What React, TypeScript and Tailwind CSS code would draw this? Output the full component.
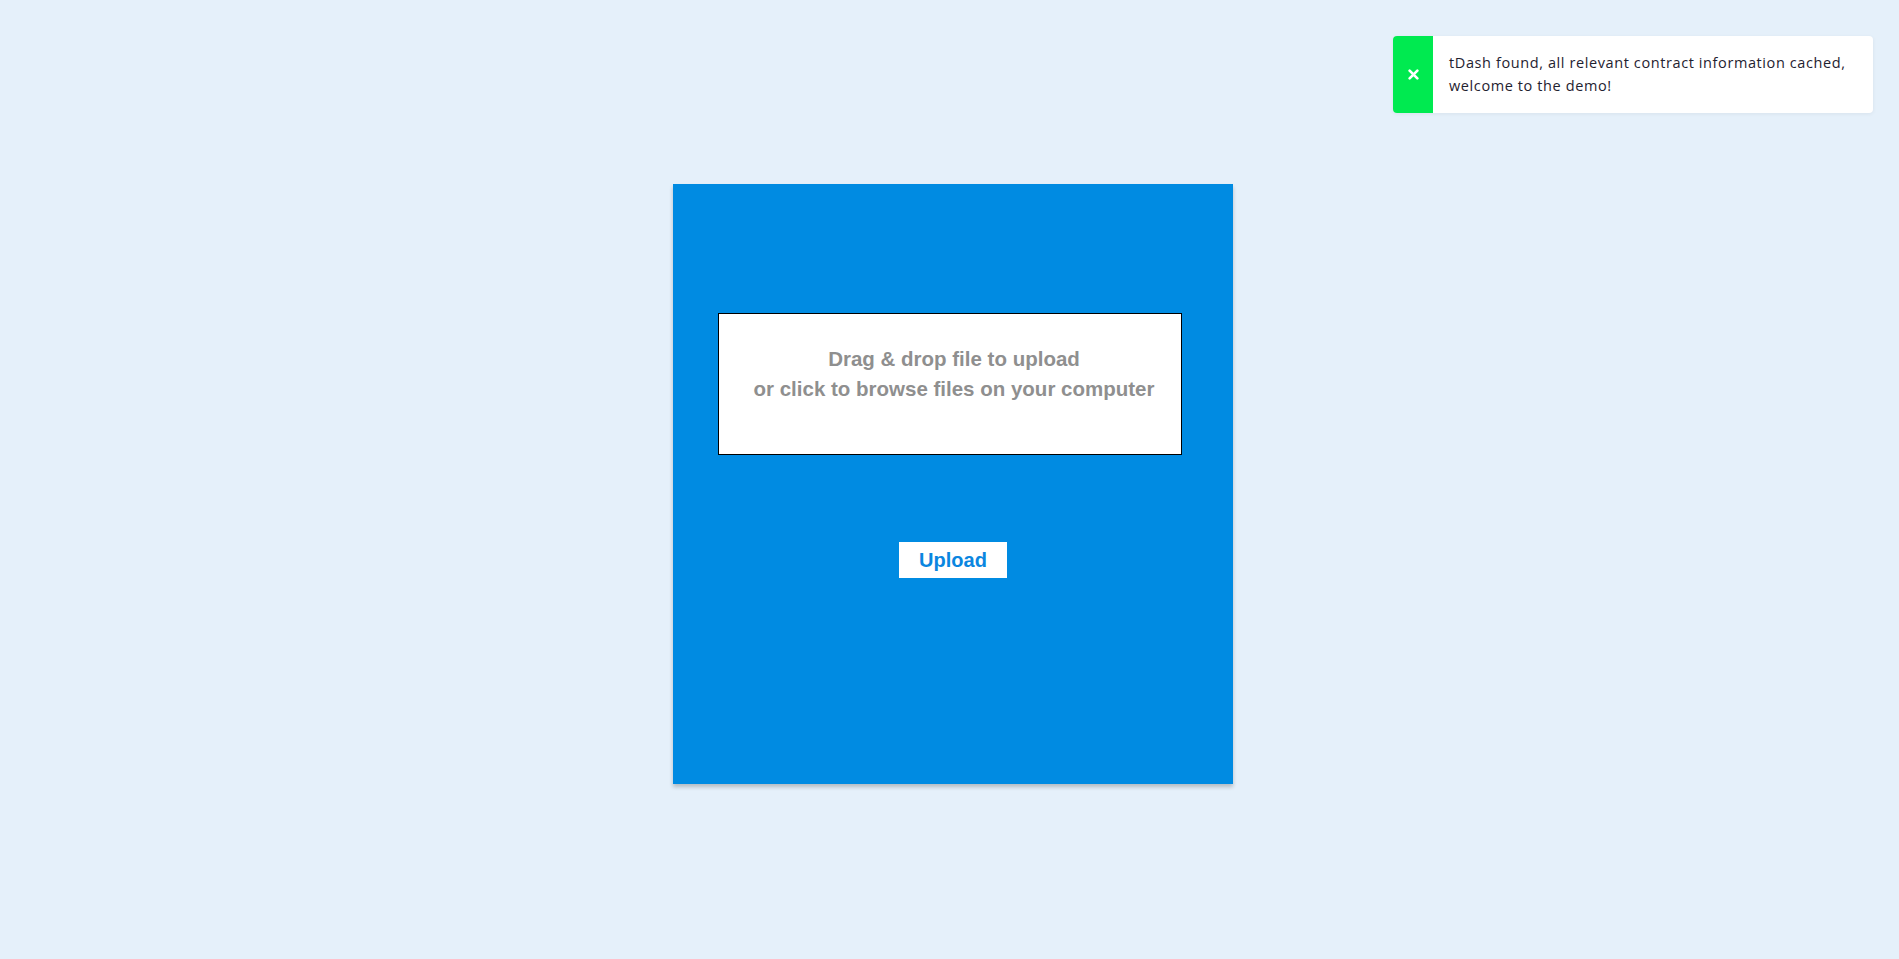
import React from 'react';

function Toast() {
  return (
    <div className="absolute top-[36px] right-[26px] flex h-[77px] w-[480px] overflow-hidden rounded-[4px] bg-white shadow-[0_1px_4px_rgba(0,0,0,0.06)]">
      <div className="flex w-[40px] shrink-0 items-center justify-center bg-[#00ea50]">
        <svg width="11" height="11" viewBox="0 0 10 10">
          <path d="M1.5 1.5 L8.5 8.5 M8.5 1.5 L1.5 8.5" stroke="#fff" strokeWidth="2.4" strokeLinecap="round" />
        </svg>
      </div>
      <div className="flex items-center pl-[16px] pr-[10px] pb-[2px]">
        <p
          className="text-[14.5px] leading-[23px] tracking-[0.6px] text-[#1f2230]"
          style={{ fontFamily: '"Open Sans", "Noto Sans", sans-serif' }}
        >
          tDash found, all relevant contract information cached, welcome to the demo!
        </p>
      </div>
    </div>
  );
}

export default function App() {
  return (
    <div
      className="relative min-h-screen bg-[#e5f0fa] pt-[184px]"
      style={{ fontFamily: '"Liberation Sans", Arial, sans-serif' }}
    >
      <Toast />
      <div className="flex justify-center pl-[7px]">
        <div className="h-[600px] w-[560px] bg-[#008be2] pt-[129px] shadow-[0_3px_4px_rgba(0,0,0,0.22)]">
          <div className="ml-[45px] flex h-[142px] w-[464px] flex-col items-center justify-center border border-black bg-white pb-[20px] pl-[8px] text-[20.5px] font-bold leading-[30px] text-[#8f8f8f]">
            <p>Drag &amp; drop file to upload</p>
            <p>or click to browse files on your computer</p>
          </div>
          <div className="mt-[87px] flex justify-center">
            <button className="h-[36px] w-[108px] bg-white text-[20px] font-bold text-[#0a86e0]">
              Upload
            </button>
          </div>
        </div>
      </div>
    </div>
  );
}
